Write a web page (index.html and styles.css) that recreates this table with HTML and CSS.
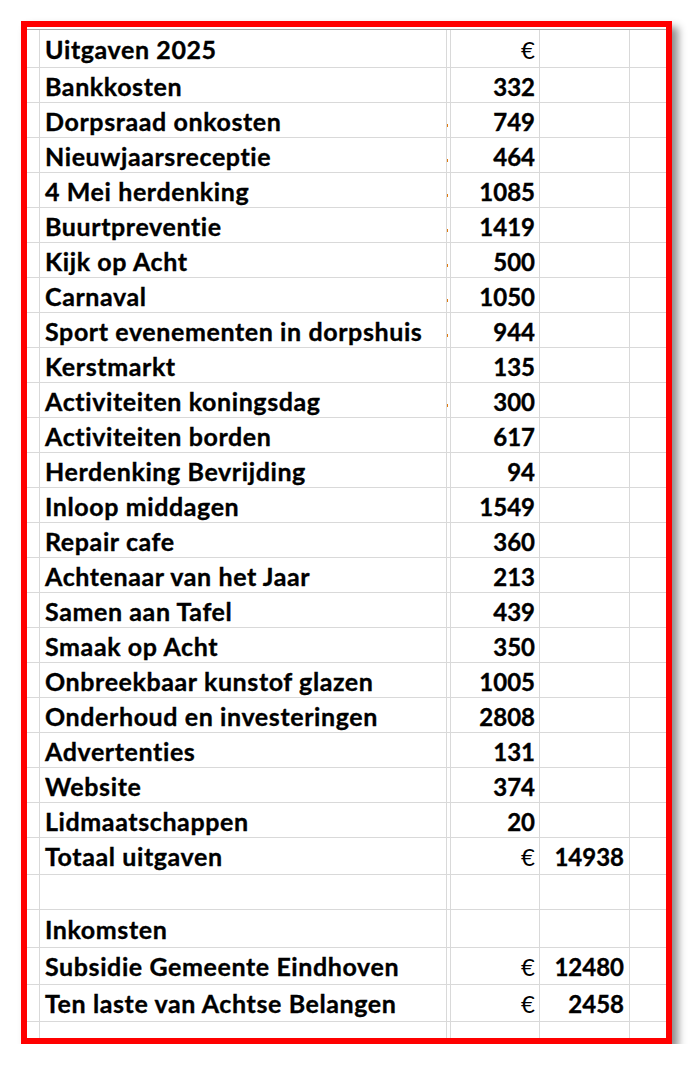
FILE: index.html
```html
<!DOCTYPE html>
<html lang="nl">
<head>
<meta charset="utf-8">
<title>Uitgaven 2025</title>
<link rel="stylesheet" href="styles.css">
</head>
<body>
<div class="frame">
  <div class="sheet">
    <div class="row first"><div class="c a"></div><div class="c b">Uitgaven 2025</div><div class="c g"></div><div class="c n"><span class="eur">€</span></div><div class="c d"></div><div class="c e"></div></div>
    <div class="row"><div class="c a"></div><div class="c b">Bankkosten</div><div class="c g"></div><div class="c n">332</div><div class="c d"></div><div class="c e"></div></div>
    <div class="row"><div class="c a"></div><div class="c b">Dorpsraad onkosten</div><div class="c g"><i class="mark"></i></div><div class="c n">749</div><div class="c d"></div><div class="c e"></div></div>
    <div class="row"><div class="c a"></div><div class="c b">Nieuwjaarsreceptie</div><div class="c g"><i class="mark"></i></div><div class="c n">464</div><div class="c d"></div><div class="c e"></div></div>
    <div class="row"><div class="c a"></div><div class="c b">4 Mei herdenking</div><div class="c g"><i class="mark"></i></div><div class="c n">1085</div><div class="c d"></div><div class="c e"></div></div>
    <div class="row"><div class="c a"></div><div class="c b">Buurtpreventie</div><div class="c g"><i class="mark"></i></div><div class="c n">1419</div><div class="c d"></div><div class="c e"></div></div>
    <div class="row"><div class="c a"></div><div class="c b">Kijk op Acht</div><div class="c g"><i class="mark"></i></div><div class="c n">500</div><div class="c d"></div><div class="c e"></div></div>
    <div class="row"><div class="c a"></div><div class="c b">Carnaval</div><div class="c g"><i class="mark"></i></div><div class="c n">1050</div><div class="c d"></div><div class="c e"></div></div>
    <div class="row"><div class="c a"></div><div class="c b">Sport evenementen in dorpshuis</div><div class="c g"><i class="mark"></i></div><div class="c n">944</div><div class="c d"></div><div class="c e"></div></div>
    <div class="row"><div class="c a"></div><div class="c b">Kerstmarkt</div><div class="c g"></div><div class="c n">135</div><div class="c d"></div><div class="c e"></div></div>
    <div class="row"><div class="c a"></div><div class="c b">Activiteiten koningsdag</div><div class="c g"><i class="mark"></i></div><div class="c n">300</div><div class="c d"></div><div class="c e"></div></div>
    <div class="row"><div class="c a"></div><div class="c b">Activiteiten borden</div><div class="c g"></div><div class="c n">617</div><div class="c d"></div><div class="c e"></div></div>
    <div class="row"><div class="c a"></div><div class="c b">Herdenking Bevrijding</div><div class="c g"></div><div class="c n">94</div><div class="c d"></div><div class="c e"></div></div>
    <div class="row"><div class="c a"></div><div class="c b">Inloop middagen</div><div class="c g"></div><div class="c n">1549</div><div class="c d"></div><div class="c e"></div></div>
    <div class="row"><div class="c a"></div><div class="c b">Repair cafe</div><div class="c g"></div><div class="c n">360</div><div class="c d"></div><div class="c e"></div></div>
    <div class="row"><div class="c a"></div><div class="c b">Achtenaar van het Jaar</div><div class="c g"></div><div class="c n">213</div><div class="c d"></div><div class="c e"></div></div>
    <div class="row"><div class="c a"></div><div class="c b">Samen aan Tafel</div><div class="c g"></div><div class="c n">439</div><div class="c d"></div><div class="c e"></div></div>
    <div class="row"><div class="c a"></div><div class="c b">Smaak op Acht</div><div class="c g"></div><div class="c n">350</div><div class="c d"></div><div class="c e"></div></div>
    <div class="row"><div class="c a"></div><div class="c b">Onbreekbaar kunstof glazen</div><div class="c g"></div><div class="c n">1005</div><div class="c d"></div><div class="c e"></div></div>
    <div class="row"><div class="c a"></div><div class="c b">Onderhoud en investeringen</div><div class="c g"></div><div class="c n">2808</div><div class="c d"></div><div class="c e"></div></div>
    <div class="row"><div class="c a"></div><div class="c b">Advertenties</div><div class="c g"></div><div class="c n">131</div><div class="c d"></div><div class="c e"></div></div>
    <div class="row"><div class="c a"></div><div class="c b">Website</div><div class="c g"></div><div class="c n">374</div><div class="c d"></div><div class="c e"></div></div>
    <div class="row"><div class="c a"></div><div class="c b">Lidmaatschappen</div><div class="c g"></div><div class="c n">20</div><div class="c d"></div><div class="c e"></div></div>
    <div class="row h37"><div class="c a"></div><div class="c b">Totaal uitgaven</div><div class="c g"></div><div class="c n"><span class="eur">€</span></div><div class="c d">14938</div><div class="c e"></div></div>
    <div class="row"><div class="c a"></div><div class="c b"></div><div class="c g"></div><div class="c n"></div><div class="c d"></div><div class="c e"></div></div>
    <div class="row h38"><div class="c a"></div><div class="c b">Inkomsten</div><div class="c g"></div><div class="c n"></div><div class="c d"></div><div class="c e"></div></div>
    <div class="row h37"><div class="c a"></div><div class="c b">Subsidie Gemeente Eindhoven</div><div class="c g"></div><div class="c n"><span class="eur">€</span></div><div class="c d">12480</div><div class="c e"></div></div>
    <div class="row h37"><div class="c a"></div><div class="c b">Ten laste van Achtse Belangen</div><div class="c g"></div><div class="c n"><span class="eur">€</span></div><div class="c d">2458</div><div class="c e"></div></div>
    <div class="row filler"><div class="c a"></div><div class="c b"></div><div class="c g"></div><div class="c n"></div><div class="c d"></div><div class="c e"></div></div>
  </div>
</div>
</body>
</html>
```
FILE: styles.css
```css
* { box-sizing: border-box; }
html, body { margin: 0; padding: 0; background: #ffffff; }
body {
  font-family: Lato, "Liberation Sans", sans-serif;
  color: #000;
}
.frame {
  margin: 21px 0 0 21px;
  width: 651px;
  height: 1023px;
  border: 6px solid #ff0000;
  background: #fff;
  box-shadow: 6px 6px 8px rgba(0, 0, 0, 0.45);
  padding-top: 2px;
}
.sheet {
  height: 100%;
  display: flex;
  flex-direction: column;
  border-top: 1px solid #a9a9a9;
}
.row {
  display: grid;
  grid-template-columns: 13px 407px 4px 89px 90px 1fr;
  height: 35px;
  border-bottom: 1px solid #d9d9d9;
  flex: none;
}
.row.first { height: 38px; }
.row.first .c { padding-bottom: 5px; }
.row.h37 { height: 37px; }
.row.h38 { height: 38px; }
.row.h37 .c, .row.h38 .c { padding-bottom: 5px; }
.row.filler { flex: 1; border-bottom: none; }
.c {
  border-right: 1px solid #d9d9d9;
  display: flex;
  align-items: flex-end;
  font-size: 24px;
  font-weight: 700;
  line-height: 1;
  padding-bottom: 3px;
  white-space: nowrap;
  position: relative;
  -webkit-text-stroke: 0.35px #000;
}
.c.e { border-right: none; }
.c.b { padding-left: 5px; font-size: 25px; letter-spacing: 0.6px; }
.c.n { justify-content: flex-end; padding-right: 4px; }
.c.d { justify-content: flex-end; padding-right: 5px; }
.eur { font-weight: 400; -webkit-text-stroke: 0; }
.mark {
  position: absolute;
  left: 0;
  top: 21px;
  width: 1px;
  height: 3px;
  background: #e07b12;
}
```
